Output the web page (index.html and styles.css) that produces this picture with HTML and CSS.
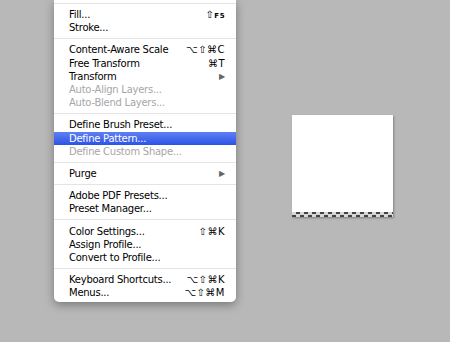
FILE: index.html
```html
<!DOCTYPE html>
<html lang="en">
<head>
    <meta charset="UTF-8">
    <title>Edit Menu</title>
    <link rel="stylesheet" href="styles.css">
</head>
<body>
    <div class="desk">
        <div class="menu">
            <div class="sep top"></div>
            <div class="item"><span>Fill...</span><span class="key">&#8679;<small>F5</small></span></div>
            <div class="item"><span>Stroke...</span></div>
            <div class="sep"></div>
            <div class="item"><span>Content-Aware Scale</span><span class="key">&#8997;&#8679;&#8984;C</span></div>
            <div class="item"><span>Free Transform</span><span class="key">&#8984;T</span></div>
            <div class="item"><span>Transform</span><span class="arrow">&#9654;</span></div>
            <div class="item off"><span>Auto-Align Layers...</span></div>
            <div class="item off"><span>Auto-Blend Layers...</span></div>
            <div class="sep"></div>
            <div class="item"><span>Define Brush Preset...</span></div>
            <div class="item active"><span>Define Pattern...</span></div>
            <div class="item off"><span>Define Custom Shape...</span></div>
            <div class="sep"></div>
            <div class="item"><span>Purge</span><span class="arrow">&#9654;</span></div>
            <div class="sep"></div>
            <div class="item"><span>Adobe PDF Presets...</span></div>
            <div class="item"><span>Preset Manager...</span></div>
            <div class="sep"></div>
            <div class="item"><span>Color Settings...</span><span class="key">&#8679;&#8984;K</span></div>
            <div class="item"><span>Assign Profile...</span></div>
            <div class="item"><span>Convert to Profile...</span></div>
            <div class="sep"></div>
            <div class="item"><span>Keyboard Shortcuts...</span><span class="key">&#8997;&#8679;&#8984;K</span></div>
            <div class="item"><span>Menus...</span><span class="key">&#8997;&#8679;&#8984;M</span></div>
        </div>

        <div class="doc">
            <div class="checker"></div>
        </div>
    </div>
</body>
</html>
```

FILE: styles.css
```css
* {
    box-sizing: border-box;
}
body {
    margin: 0;
    background-color: #b8b8b8;
    font-family: "DejaVu Sans", sans-serif;
}
.desk {
    display: flex;
    align-items: flex-start;
    height: 342px;
    overflow: hidden;
}
.menu {
    width: 182px;
    margin-left: 54px;
    padding-bottom: 3px;
    background-color: #fff;
    border-radius: 0 0 5px 5px;
    box-shadow: 0 3px 10px rgba(0, 0, 0, 0.35);
}
.sep {
    height: 9px;
    padding-top: 4px;
}
.sep.top {
    height: 8px;
    padding-top: 3px;
}
.sep::after {
    content: "";
    display: block;
    border-top: 1px solid #e4e4e4;
}
.item {
    display: flex;
    justify-content: space-between;
    align-items: center;
    height: 13.2px;
    padding: 0 11px 0 15px;
    font-size: 10px;
    letter-spacing: -0.25px;
    color: #000;
}
.item.off {
    color: #a6a6a6;
}
.item.active {
    color: #fff;
    background: linear-gradient(#5f80f3, #2c53e6);
}
.key {
    letter-spacing: 0.5px;
}
.key small {
    font-size: 7px;
    font-weight: bold;
}
.arrow {
    font-size: 8px;
    color: #666;
}
.doc {
    display: flex;
    flex-direction: column;
    justify-content: flex-end;
    width: 101px;
    height: 102px;
    margin-left: 56px;
    margin-top: 115px;
    background-color: #fff;
    box-shadow: 1px 1px 2px rgba(0, 0, 0, 0.3);
}
.checker {
    height: 5px;
    background: conic-gradient(#444 25%, #d8d8d8 0 50%, #444 0 75%, #d8d8d8 0) 0 0 / 8px 5px;
}
```
